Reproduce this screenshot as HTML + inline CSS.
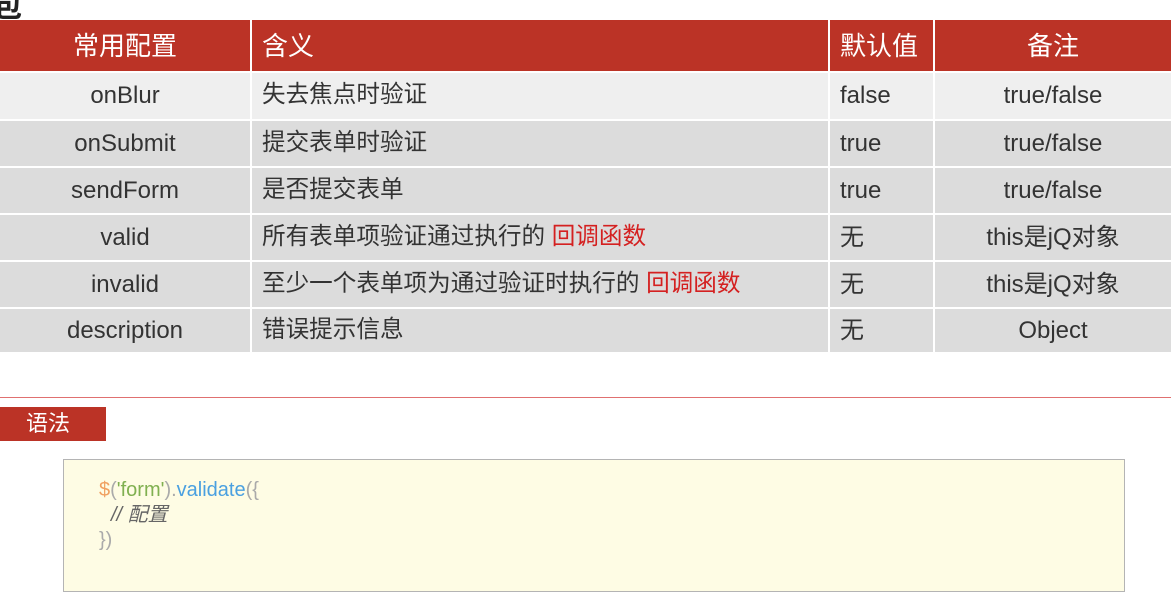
<!DOCTYPE html><html><head><meta charset="utf-8"><style>
body{margin:0;width:1171px;height:596px;background:#fff;position:relative;overflow:hidden;font-family:"Liberation Sans","Noto Sans CJK SC",sans-serif;color:#333}
.c{position:absolute;box-sizing:border-box;font-size:24px;line-height:1;display:flex;align-items:center;white-space:pre}
.h{background:#bb3326;color:#fff;font-size:26px!important}
.ctr{justify-content:center}.l{padding-left:10px}
.r{color:#d42020}
</style></head><body>
<div style="position:absolute;left:-8px;top:-18px;font-size:30px;font-weight:bold;color:#222">包</div>
<div id="t"></div>
<div style="position:absolute;left:0;top:397px;width:1171px;height:1px;background:#e07070"></div>
<div style="position:absolute;left:0;top:407px;width:106px;height:34px;background:#bb3326;color:#fff;font-size:22px;line-height:34px;padding-left:26px;box-sizing:border-box">语法</div>
<div style="position:absolute;left:63px;top:459px;width:1062px;height:133px;background:#fefce4;border:1px solid #b4b4b4;box-sizing:border-box"></div>
<div style="position:absolute;left:99px;top:478px;font-size:20px;line-height:25px;color:#aaa">
<div><span style="color:#f0a060">$</span>(<span style="color:#80b050">'form'</span>).<span style="color:#4aa0e0">validate</span>({</div>
<div style="font-style:italic;color:#666;padding-left:12px">// 配置</div>
<div>})</div></div>
<script>
var rows=[["常用配置","含义","默认值","备注"],["onBlur","失去焦点时验证","false","true/false"],["onSubmit","提交表单时验证","true","true/false"],["sendForm","是否提交表单","true","true/false"],["valid","所有表单项验证通过执行的 <span class=r>回调函数</span>","无","this是jQ对象"],["invalid","至少一个表单项为通过验证时执行的 <span class=r>回调函数</span>","无","this是jQ对象"],["description","错误提示信息","无","Object"]];
var xs=[0,252,830,935,1171],ys=[20,73,121,168,215,262,309,354],h="";
rows.forEach(function(r,i){for(var j=0;j<4;j++){var bg=i==0?"":(i==1?"background:#efefef;":"background:#dcdcdc;");
var fs=(j==1)?"font-size:23.6px;":"";
h+='<div class="c '+(i==0?'h ':'')+(j==0||j==3?'ctr':'l')+'" style="'+bg+fs+'left:'+xs[j]+'px;top:'+ys[i]+'px;width:'+(xs[j+1]-xs[j]-(j<3?2:0))+'px;height:'+(ys[i+1]-ys[i]-2)+'px">'+r[j]+'</div>';}});
document.getElementById("t").innerHTML=h;
</script>
</body></html>
